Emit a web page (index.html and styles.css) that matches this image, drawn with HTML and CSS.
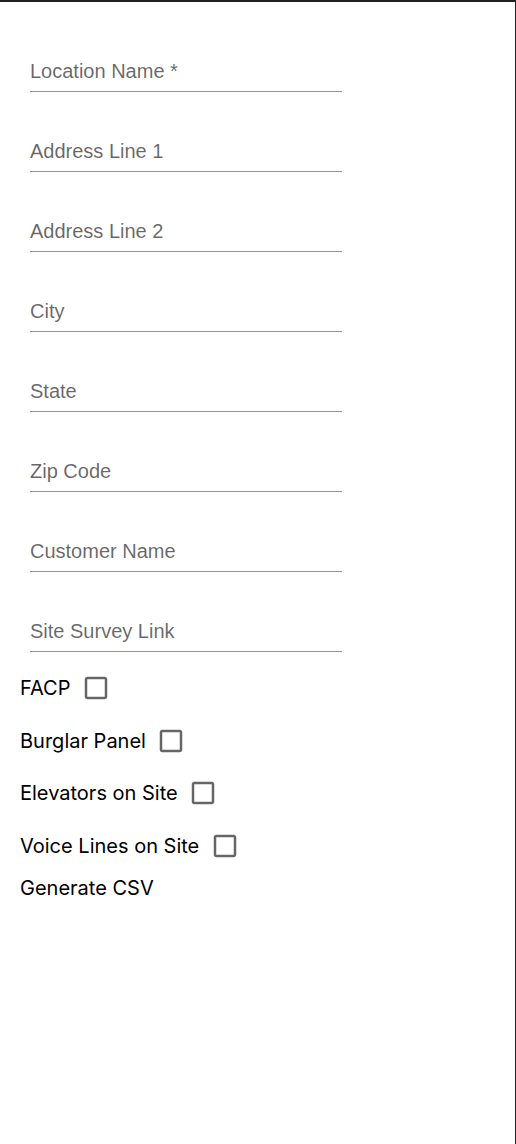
FILE: index.html
```html
<!DOCTYPE html>
<html lang="en">
<head>
<meta charset="utf-8">
<title>Location Form</title>
<link rel="stylesheet" href="styles.css">
</head>
<body>
<div class="page">
  <form class="form">
    <div class="fields">
      <div class="field"><span class="field-label">Location Name *</span></div>
      <div class="field"><span class="field-label">Address Line 1</span></div>
      <div class="field"><span class="field-label">Address Line 2</span></div>
      <div class="field"><span class="field-label">City</span></div>
      <div class="field"><span class="field-label">State</span></div>
      <div class="field"><span class="field-label">Zip Code</span></div>
      <div class="field"><span class="field-label">Customer Name</span></div>
      <div class="field"><span class="field-label">Site Survey Link</span></div>
    </div>
    <div class="checks">
      <label class="check-row"><span class="check-text">FACP</span><span class="check-box"><svg viewBox="0 0 24 24" class="check-icon"><path d="M19 5v14H5V5h14m0-2H5c-1.11 0-2 .9-2 2v14c0 1.1.89 2 2 2h14c1.1 0 2-.9 2-2V5c0-1.1-.9-2-2-2z"/></svg></span></label>
      <label class="check-row"><span class="check-text">Burglar Panel</span><span class="check-box"><svg viewBox="0 0 24 24" class="check-icon"><path d="M19 5v14H5V5h14m0-2H5c-1.11 0-2 .9-2 2v14c0 1.1.89 2 2 2h14c1.1 0 2-.9 2-2V5c0-1.1-.9-2-2-2z"/></svg></span></label>
      <label class="check-row"><span class="check-text">Elevators on Site</span><span class="check-box"><svg viewBox="0 0 24 24" class="check-icon"><path d="M19 5v14H5V5h14m0-2H5c-1.11 0-2 .9-2 2v14c0 1.1.89 2 2 2h14c1.1 0 2-.9 2-2V5c0-1.1-.9-2-2-2z"/></svg></span></label>
      <label class="check-row"><span class="check-text">Voice Lines on Site</span><span class="check-box"><svg viewBox="0 0 24 24" class="check-icon"><path d="M19 5v14H5V5h14m0-2H5c-1.11 0-2 .9-2 2v14c0 1.1.89 2 2 2h14c1.1 0 2-.9 2-2V5c0-1.1-.9-2-2-2z"/></svg></span></label>
    </div>
    <div class="generate">Generate CSV</div>
  </form>
</div>
</body>
</html>
```
FILE: styles.css
```css
html, body {
  margin: 0;
  padding: 0;
  background: #fff;
}
.page {
  width: 516px;
  height: 1144px;
  box-sizing: border-box;
  border-top: 2px solid #222;
  border-right: 1px solid #222;
  background: #fff;
}
.form {
  padding: 57px 0 0 20px;
  display: flex;
  flex-direction: column;
}
.fields {
  display: flex;
  flex-direction: column;
  gap: 47px;
  padding-left: 10px;
}
.field {
  width: 312px;
  padding-bottom: 8px;
  border-bottom: 1px solid #949494;
}
.field-label {
  display: block;
  font-family: "Liberation Sans", Arial, sans-serif;
  font-size: 20px;
  line-height: 24px;
  color: rgba(0, 0, 0, 0.6);
}
.checks {
  margin-top: 10px;
  display: flex;
  flex-direction: column;
}
.check-row {
  display: flex;
  align-items: center;
  height: 52.5px;
}
.check-text {
  font-family: Inter, "Noto Sans", sans-serif;
  font-size: 20px;
  line-height: 24px;
  color: #000;
}
.check-box {
  display: inline-flex;
  padding: 11.25px 11.25px 11.25px 10.5px;
}
.check-icon {
  width: 30px;
  height: 30px;
  fill: rgba(0, 0, 0, 0.6);
}
.generate {
  margin-top: 4px;
  font-family: Inter, "Noto Sans", sans-serif;
  font-size: 20px;
  line-height: 24px;
  color: #000;
}
```
